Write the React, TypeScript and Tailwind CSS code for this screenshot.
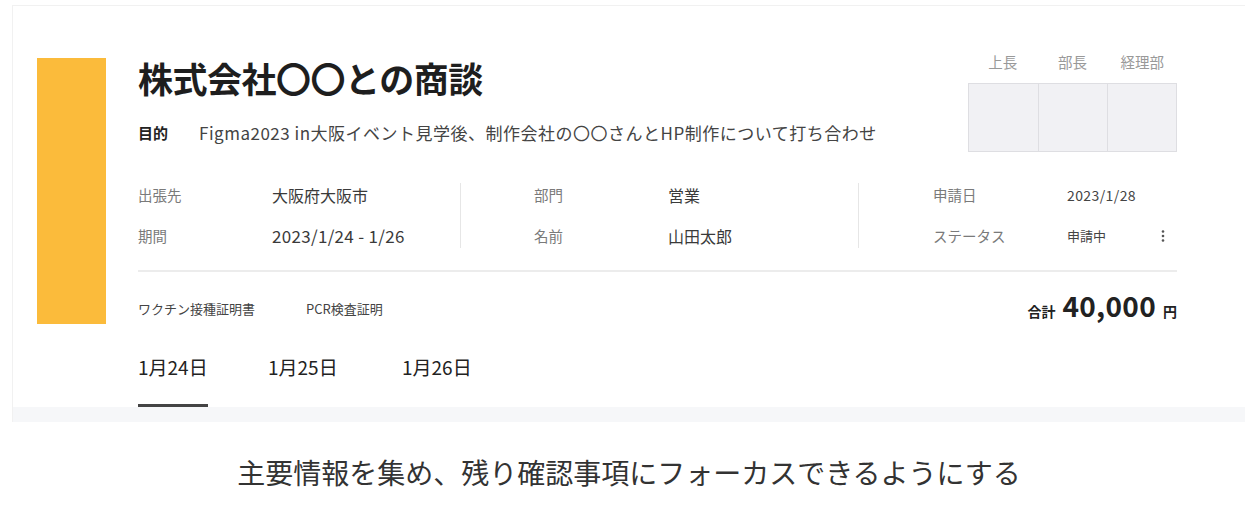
import { type ReactNode } from 'react'

const FONT = { fontFamily: '"Noto Sans CJK JP", "Noto Sans", sans-serif' }

const APPROVERS = ['上長', '部長', '経理部']
const TABS = [
  { label: '1月24日', w: 'w-[130px]' },
  { label: '1月25日', w: 'w-[134px]' },
  { label: '1月26日', w: 'w-[131px]' },
]

function InfoRow({ label, value, valueClass = 'text-[15px] text-[#3a3a3a]', extra }: {
  label: string
  value: string
  valueClass?: string
  extra?: ReactNode
}) {
  return (
    <div className="flex items-center h-6">
      <span className="w-[134px] shrink-0 text-[14.5px] text-[#7a7a7a]">{label}</span>
      <span className={valueClass}>{value}</span>
      {extra}
    </div>
  )
}

function MoreIcon() {
  return (
    <svg width="4" height="12" viewBox="0 0 4 12" className="ml-auto mr-[12px]">
      <circle cx="2" cy="1.5" r="1.3" fill="#555" />
      <circle cx="2" cy="6" r="1.3" fill="#555" />
      <circle cx="2" cy="10.5" r="1.3" fill="#555" />
    </svg>
  )
}

export default function App() {
  return (
    <div className="w-[1250px] h-[518px] bg-white overflow-hidden" style={FONT}>
      {/* Card */}
      <div className="ml-[12px] mt-[5px] w-[1233px] border-t border-l border-[#f1f1f1]">
        <div className="flex items-start pl-[24px] pt-[52px] bg-white">
          {/* Accent bar */}
          <div className="w-[69px] h-[266px] bg-[#fbbb3b] shrink-0" />

          {/* Main content */}
          <div className="ml-[32px] w-[1039px]">
            {/* Header */}
            <div className="flex items-start justify-between">
              <div>
                <h1 className="text-[35px] leading-[40px] font-bold text-[#1e1e1e] tracking-[-0.5px]">
                  株式会社〇〇との商談
                </h1>
                <div className="flex items-center mt-[23px] h-6">
                  <span className="text-[15px] font-bold text-[#222] w-[61px]">目的</span>
                  <span className="text-[17px] tracking-[0.5px] text-[#444]">
                    Figma2023 in大阪イベント見学後、制作会社の〇〇さんとHP制作について打ち合わせ
                  </span>
                </div>
              </div>

              {/* Approval stamps */}
              <div className="-mt-[4px] w-[209px]">
                <div className="grid grid-cols-3 h-4 text-[14.5px] leading-4 text-[#999] text-center">
                  {APPROVERS.map((a) => (
                    <span key={a}>{a}</span>
                  ))}
                </div>
                <div className="grid grid-cols-3 mt-[13px] h-[69px] border border-[#dedee2] bg-[#f1f1f4]">
                  {APPROVERS.map((a, i) => (
                    <div key={a} className={i > 0 ? 'border-l border-[#dedee2]' : ''} />
                  ))}
                </div>
              </div>
            </div>

            {/* Info grid */}
            <div className="flex mt-[31px]">
              <div className="w-[322px] flex flex-col gap-[17px]">
                <InfoRow label="出張先" value="大阪府大阪市" valueClass="text-[16px] text-[#3a3a3a]" />
                <InfoRow label="期間" value="2023/1/24 - 1/26" valueClass="text-[17px] tracking-[0.3px] text-[#3a3a3a]" />
              </div>
              <div className="w-px bg-[#e6e6e6]" />
              <div className="w-[397px] pl-[73px] flex flex-col gap-[17px]">
                <InfoRow label="部門" value="営業" valueClass="text-[16px] text-[#3a3a3a]" />
                <InfoRow label="名前" value="山田太郎" valueClass="text-[16px] text-[#3a3a3a]" />
              </div>
              <div className="w-px bg-[#e6e6e6]" />
              <div className="flex-1 pl-[74px] flex flex-col gap-[17px]">
                <InfoRow label="申請日" value="2023/1/28" valueClass="text-[14px] tracking-[0.4px] text-[#444]" />
                <InfoRow label="ステータス" value="申請中" valueClass="text-[13px] text-[#444]" extra={<MoreIcon />} />
              </div>
            </div>

            <div className="mt-[22px] h-[2px] bg-[#ececec]" />

            {/* Documents + total */}
            <div className="flex items-center justify-between mt-[21px] h-8">
              <div className="flex items-center gap-[51px] text-[13px] text-[#444]">
                <span>ワクチン接種証明書</span>
                <span>PCR検査証明</span>
              </div>
              <div className="flex items-baseline gap-[7px] -mt-[8px] text-[#222]">
                <span className="text-[14px] font-bold">合計</span>
                <span className="text-[28px] font-bold leading-8 tracking-[0.3px]">40,000</span>
                <span className="text-[14px] font-bold">円</span>
              </div>
            </div>

            {/* Date tabs */}
            <div className="flex mt-[30px]">
              {TABS.map((t, i) => (
                <div key={t.label} className={t.w}>
                  <div className="inline-flex flex-col">
                    <span className="text-[19px] leading-6 text-[#222]">{t.label}</span>
                    <div className={'mt-[25px] h-[3px] ' + (i === 0 ? 'bg-[#444]' : 'bg-transparent')} />
                  </div>
                </div>
              ))}
            </div>
          </div>
        </div>

        {/* Bottom band */}
        <div className="h-[15px] bg-[#f6f7f9]" />
      </div>

      {/* Caption */}
      <div className="h-[96px] pt-[4px] pl-[8px] flex items-center justify-center">
        <p className="text-[28px] text-[#333]">主要情報を集め、残り確認事項にフォーカスできるようにする</p>
      </div>
    </div>
  )
}
